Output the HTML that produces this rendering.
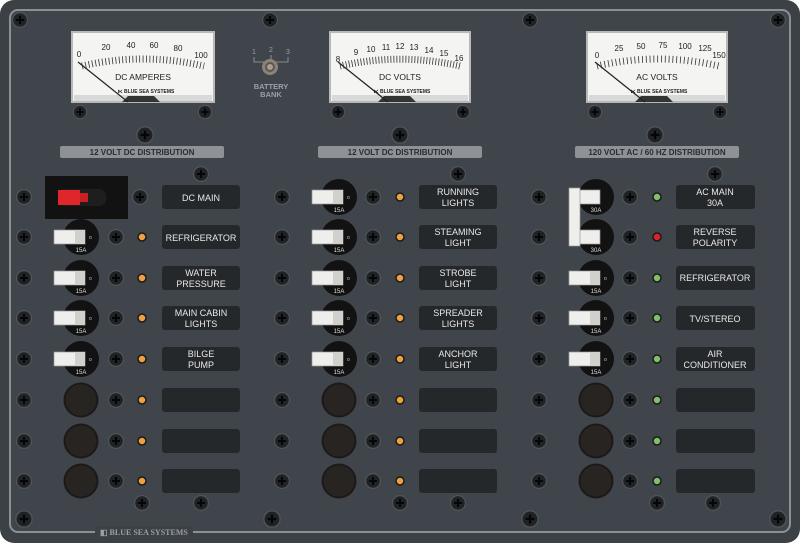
<!DOCTYPE html>
<html><head><meta charset="utf-8"><style>
html,body{margin:0;padding:0;background:#fff;}
svg{display:block;font-family:"Liberation Sans",sans-serif;}
</style></head><body>
<svg width="800" height="543" viewBox="0 0 800 543" xmlns="http://www.w3.org/2000/svg">
<defs>
<symbol id="s" viewBox="-10 -10 20 20"><circle r="8" fill="#50555a"/><circle r="6.8" fill="#202326"/><path d="M-4 0H4M0 -4V4" stroke="#050505" stroke-width="2"/></symbol>
<symbol id="cap" viewBox="-18 -18 36 36"><circle r="17.5" fill="#1c1918"/><circle r="15.5" fill="#282422"/></symbol>
<g id="brk"><circle r="18" fill="#121212"/><rect x="-27" y="-7" width="31" height="14" fill="#eeeeec" stroke="#999" stroke-width="0.7"/><rect x="-6" y="-7" width="10" height="14" fill="#d0d0cc"/><text x="8" y="2" font-size="5" fill="#ccc">o</text><text y="15" font-size="6" fill="#ddd" text-anchor="middle">15A</text></g>
<g id="brk30"><circle r="18" fill="#121212"/><rect x="-17" y="-7" width="21" height="14" fill="#eeeeec" stroke="#999" stroke-width="0.7"/><text y="15" font-size="6" fill="#ddd" text-anchor="middle">30A</text></g>
</defs>
<rect x="0" y="0" width="800" height="543" rx="14" fill="#3c4146"/>
<rect x="10" y="10" width="780" height="522" rx="8" fill="#40454b" stroke="#8b9095" stroke-width="2"/>
<rect x="95" y="526" width="98" height="12" fill="#3c4146"/>
<text x="100" y="535" font-size="8" fill="#9aa0a5" font-weight="bold" font-family="Liberation Serif,serif">◧ BLUE SEA SYSTEMS</text>

<g transform="translate(72,32)">
<rect width="142" height="70" fill="#f4f4f2" stroke="#b8b8b8" stroke-width="2"/>
<path d="M10 34 A269 269 0 0 1 132 34" fill="none" stroke="#333" stroke-width="7" stroke-dasharray="0.8 2.6"/>
<g font-size="8" fill="#222" text-anchor="middle"><text x="7" y="25">0</text><text x="34" y="18">20</text><text x="59" y="16">40</text><text x="82" y="16">60</text><text x="106" y="19">80</text><text x="129" y="26">100</text></g>
<text x="71" y="48" font-size="8.5" text-anchor="middle" fill="#222">DC  AMPERES</text>
<text x="74" y="61" font-size="5" font-weight="bold" text-anchor="middle" fill="#222">⋉ BLUE SEA SYSTEMS</text>
<rect x="2" y="63" width="138" height="6" fill="#d8d8d8"/><path d="M50 70 L56 64 H82 L88 70Z" fill="#333"/>
<path d="M6 30 L56 70" stroke="#222" stroke-width="1.2"/>
</g>
<g transform="translate(330,32)">
<rect width="140" height="70" fill="#f4f4f2" stroke="#b8b8b8" stroke-width="2"/>
<path d="M10 34 A269 269 0 0 1 130 34" fill="none" stroke="#333" stroke-width="7" stroke-dasharray="0.8 2.2"/>
<g font-size="8" fill="#222" text-anchor="middle"><text x="8" y="30">8</text><text x="26" y="23">9</text><text x="41" y="20">10</text><text x="56" y="18">11</text><text x="70" y="17">12</text><text x="84" y="18">13</text><text x="99" y="21">14</text><text x="114" y="24">15</text><text x="129" y="29">16</text></g>
<text x="70" y="48" font-size="8.5" text-anchor="middle" fill="#222">DC  VOLTS</text>
<text x="72" y="61" font-size="5" font-weight="bold" text-anchor="middle" fill="#222">⋉ BLUE SEA SYSTEMS</text>
<rect x="2" y="63" width="136" height="6" fill="#d8d8d8"/><path d="M48 70 L54 64 H80 L86 70Z" fill="#333"/>
<path d="M8 30 L58 70" stroke="#222" stroke-width="1.2"/>
</g>
<g transform="translate(587,32)">
<rect width="140" height="70" fill="#f4f4f2" stroke="#b8b8b8" stroke-width="2"/>
<path d="M10 34 A269 269 0 0 1 132 34" fill="none" stroke="#333" stroke-width="7" stroke-dasharray="0.8 3"/>
<g font-size="8" fill="#222" text-anchor="middle"><text x="10" y="26">0</text><text x="32" y="19">25</text><text x="54" y="17">50</text><text x="76" y="16">75</text><text x="98" y="17">100</text><text x="118" y="19">125</text><text x="132" y="26">150</text></g>
<text x="70" y="48" font-size="8.5" text-anchor="middle" fill="#222">AC  VOLTS</text>
<text x="72" y="61" font-size="5" font-weight="bold" text-anchor="middle" fill="#222">⋉ BLUE SEA SYSTEMS</text>
<rect x="2" y="63" width="136" height="6" fill="#d8d8d8"/><path d="M48 70 L54 64 H80 L86 70Z" fill="#333"/>
<path d="M8 30 L58 70" stroke="#222" stroke-width="1.2"/>
</g>

<g fill="#9aa0a5" font-size="7" text-anchor="middle"><text x="254" y="54">1</text><text x="271" y="52">2</text><text x="288" y="54">3</text>
<text x="271" y="89" font-size="7.5" font-weight="bold">BATTERY</text><text x="271" y="97" font-size="7.5" font-weight="bold">BANK</text></g>
<path d="M254 57V62H288V57M271 55V62" stroke="#9aa0a5" fill="none" stroke-width="0.8"/>
<circle cx="270" cy="67" r="8" fill="#8a8378"/><circle cx="270" cy="67" r="5" fill="#5e574d"/><circle cx="270" cy="67" r="3" fill="#a79f92"/>

<g>
<use href="#s" x="10" y="10" width="20" height="20"/><use href="#s" x="260" y="10" width="20" height="20"/><use href="#s" x="520" y="10" width="20" height="20"/><use href="#s" x="768" y="10" width="20" height="20"/>
<use href="#s" x="13" y="508" width="22" height="22"/><use href="#s" x="261" y="508" width="22" height="22"/><use href="#s" x="519" y="508" width="22" height="22"/><use href="#s" x="767" y="508" width="22" height="22"/>
<use href="#s" x="71" y="103" width="18" height="18"/><use href="#s" x="196" y="103" width="18" height="18"/><use href="#s" x="329" y="103" width="18" height="18"/><use href="#s" x="454" y="103" width="18" height="18"/><use href="#s" x="586" y="103" width="18" height="18"/><use href="#s" x="711" y="103" width="18" height="18"/>
<use href="#s" x="134" y="124" width="22" height="22"/><use href="#s" x="389" y="124" width="22" height="22"/><use href="#s" x="644" y="124" width="22" height="22"/>
<use href="#s" x="191" y="164" width="20" height="20"/><use href="#s" x="448" y="164" width="20" height="20"/><use href="#s" x="705" y="164" width="20" height="20"/>
<use href="#s" x="132" y="493" width="20" height="20"/><use href="#s" x="191" y="493" width="20" height="20"/><use href="#s" x="390" y="493" width="20" height="20"/><use href="#s" x="448" y="493" width="20" height="20"/><use href="#s" x="647" y="493" width="20" height="20"/><use href="#s" x="703" y="493" width="20" height="20"/>
</g>

<g font-size="8" font-weight="bold" fill="#2a2d30" text-anchor="middle">
<rect x="60" y="146" width="164" height="12" rx="2" fill="#8e9296"/><text x="142" y="155">12 VOLT DC DISTRIBUTION</text>
<rect x="318" y="146" width="164" height="12" rx="2" fill="#8e9296"/><text x="400" y="155">12 VOLT DC DISTRIBUTION</text>
<rect x="575" y="146" width="164" height="12" rx="2" fill="#8e9296"/><text x="657" y="155">120 VOLT AC / 60 HZ DISTRIBUTION</text>
</g>

<g>
<use href="#s" x="14" y="187" width="20" height="20"/><use href="#s" x="272" y="187" width="20" height="20"/><use href="#s" x="529" y="187" width="20" height="20"/>
<use href="#s" x="14" y="227" width="20" height="20"/><use href="#s" x="272" y="227" width="20" height="20"/><use href="#s" x="529" y="227" width="20" height="20"/>
<use href="#s" x="14" y="268" width="20" height="20"/><use href="#s" x="272" y="268" width="20" height="20"/><use href="#s" x="529" y="268" width="20" height="20"/>
<use href="#s" x="14" y="308" width="20" height="20"/><use href="#s" x="272" y="308" width="20" height="20"/><use href="#s" x="529" y="308" width="20" height="20"/>
<use href="#s" x="14" y="349" width="20" height="20"/><use href="#s" x="272" y="349" width="20" height="20"/><use href="#s" x="529" y="349" width="20" height="20"/>
<use href="#s" x="14" y="390" width="20" height="20"/><use href="#s" x="272" y="390" width="20" height="20"/><use href="#s" x="529" y="390" width="20" height="20"/>
<use href="#s" x="14" y="431" width="20" height="20"/><use href="#s" x="272" y="431" width="20" height="20"/><use href="#s" x="529" y="431" width="20" height="20"/>
<use href="#s" x="14" y="471" width="20" height="20"/><use href="#s" x="272" y="471" width="20" height="20"/><use href="#s" x="529" y="471" width="20" height="20"/>
<use href="#s" x="130" y="187" width="20" height="20"/><use href="#s" x="363" y="187" width="20" height="20"/><use href="#s" x="620" y="187" width="20" height="20"/>
<use href="#s" x="106" y="227" width="20" height="20"/><use href="#s" x="363" y="227" width="20" height="20"/><use href="#s" x="620" y="227" width="20" height="20"/>
<use href="#s" x="106" y="268" width="20" height="20"/><use href="#s" x="363" y="268" width="20" height="20"/><use href="#s" x="620" y="268" width="20" height="20"/>
<use href="#s" x="106" y="308" width="20" height="20"/><use href="#s" x="363" y="308" width="20" height="20"/><use href="#s" x="620" y="308" width="20" height="20"/>
<use href="#s" x="106" y="349" width="20" height="20"/><use href="#s" x="363" y="349" width="20" height="20"/><use href="#s" x="620" y="349" width="20" height="20"/>
<use href="#s" x="106" y="390" width="20" height="20"/><use href="#s" x="363" y="390" width="20" height="20"/><use href="#s" x="620" y="390" width="20" height="20"/>
<use href="#s" x="106" y="431" width="20" height="20"/><use href="#s" x="363" y="431" width="20" height="20"/><use href="#s" x="620" y="431" width="20" height="20"/>
<use href="#s" x="106" y="471" width="20" height="20"/><use href="#s" x="363" y="471" width="20" height="20"/><use href="#s" x="620" y="471" width="20" height="20"/>
</g>

<rect x="45" y="176" width="83" height="43" fill="#121212"/>
<rect x="58" y="189" width="48" height="17" rx="7" fill="#1e1e1e"/>
<rect x="58" y="190" width="22" height="15" fill="#e0262b"/><rect x="80" y="193" width="8" height="9" fill="#c82024"/>
<use href="#brk" transform="translate(81,237)"/><use href="#brk" transform="translate(81,278)"/><use href="#brk" transform="translate(81,318)"/><use href="#brk" transform="translate(81,359)"/>
<use href="#cap" x="63" y="382" width="36" height="36"/><use href="#cap" x="63" y="423" width="36" height="36"/><use href="#cap" x="63" y="463" width="36" height="36"/>
<use href="#brk" transform="translate(339,197)"/><use href="#brk" transform="translate(339,237)"/><use href="#brk" transform="translate(339,278)"/><use href="#brk" transform="translate(339,318)"/><use href="#brk" transform="translate(339,359)"/>
<use href="#cap" x="321" y="382" width="36" height="36"/><use href="#cap" x="321" y="423" width="36" height="36"/><use href="#cap" x="321" y="463" width="36" height="36"/>
<use href="#brk30" transform="translate(596,197)"/><use href="#brk30" transform="translate(596,237)"/>
<rect x="569" y="188" width="11" height="58" fill="#eeeeec" stroke="#999" stroke-width="0.7"/>
<use href="#brk" transform="translate(596,278)"/><use href="#brk" transform="translate(596,318)"/><use href="#brk" transform="translate(596,359)"/>
<use href="#cap" x="578" y="382" width="36" height="36"/><use href="#cap" x="578" y="423" width="36" height="36"/><use href="#cap" x="578" y="463" width="36" height="36"/>

<g stroke="#1a1a1a" stroke-width="1.5">
<g fill="#f0a040"><circle cx="142" cy="237" r="4"/><circle cx="142" cy="278" r="4"/><circle cx="142" cy="318" r="4"/><circle cx="142" cy="359" r="4"/><circle cx="142" cy="400" r="4"/><circle cx="142" cy="441" r="4"/><circle cx="142" cy="481" r="4"/>
<circle cx="400" cy="197" r="4"/><circle cx="400" cy="237" r="4"/><circle cx="400" cy="278" r="4"/><circle cx="400" cy="318" r="4"/><circle cx="400" cy="359" r="4"/><circle cx="400" cy="400" r="4"/><circle cx="400" cy="441" r="4"/><circle cx="400" cy="481" r="4"/></g>
<g fill="#7fbf6a"><circle cx="657" cy="197" r="4"/><circle cx="657" cy="278" r="4"/><circle cx="657" cy="318" r="4"/><circle cx="657" cy="359" r="4"/><circle cx="657" cy="400" r="4"/><circle cx="657" cy="441" r="4"/><circle cx="657" cy="481" r="4"/></g>
<circle cx="657" cy="237" r="4" fill="#e0202a"/>
</g>

<g fill="#25282b">
<rect x="162" y="185" width="78" height="24" rx="3"/><rect x="162" y="225" width="78" height="24" rx="3"/><rect x="162" y="266" width="78" height="24" rx="3"/><rect x="162" y="306" width="78" height="24" rx="3"/><rect x="162" y="347" width="78" height="24" rx="3"/><rect x="162" y="388" width="78" height="24" rx="3"/><rect x="162" y="429" width="78" height="24" rx="3"/><rect x="162" y="469" width="78" height="24" rx="3"/>
<rect x="419" y="185" width="78" height="24" rx="3"/><rect x="419" y="225" width="78" height="24" rx="3"/><rect x="419" y="266" width="78" height="24" rx="3"/><rect x="419" y="306" width="78" height="24" rx="3"/><rect x="419" y="347" width="78" height="24" rx="3"/><rect x="419" y="388" width="78" height="24" rx="3"/><rect x="419" y="429" width="78" height="24" rx="3"/><rect x="419" y="469" width="78" height="24" rx="3"/>
<rect x="676" y="185" width="79" height="24" rx="3"/><rect x="676" y="225" width="79" height="24" rx="3"/><rect x="676" y="266" width="79" height="24" rx="3"/><rect x="676" y="306" width="79" height="24" rx="3"/><rect x="676" y="347" width="79" height="24" rx="3"/><rect x="676" y="388" width="79" height="24" rx="3"/><rect x="676" y="429" width="79" height="24" rx="3"/><rect x="676" y="469" width="79" height="24" rx="3"/>
</g>
<g fill="#e8e8e8" font-size="9" text-anchor="middle">
<text x="201" y="201">DC MAIN</text>
<text x="201" y="241">REFRIGERATOR</text>
<text x="201" y="276">WATER</text><text x="201" y="287">PRESSURE</text>
<text x="201" y="316">MAIN CABIN</text><text x="201" y="327">LIGHTS</text>
<text x="201" y="357">BILGE</text><text x="201" y="368">PUMP</text>
<text x="458" y="195">RUNNING</text><text x="458" y="206">LIGHTS</text>
<text x="458" y="235">STEAMING</text><text x="458" y="246">LIGHT</text>
<text x="458" y="276">STROBE</text><text x="458" y="287">LIGHT</text>
<text x="458" y="316">SPREADER</text><text x="458" y="327">LIGHTS</text>
<text x="458" y="357">ANCHOR</text><text x="458" y="368">LIGHT</text>
<text x="715" y="195">AC MAIN</text><text x="715" y="206">30A</text>
<text x="715" y="235">REVERSE</text><text x="715" y="246">POLARITY</text>
<text x="715" y="281">REFRIGERATOR</text>
<text x="715" y="322">TV/STEREO</text>
<text x="715" y="357">AIR</text><text x="715" y="368">CONDITIONER</text>
</g>
</svg>
</body></html>
